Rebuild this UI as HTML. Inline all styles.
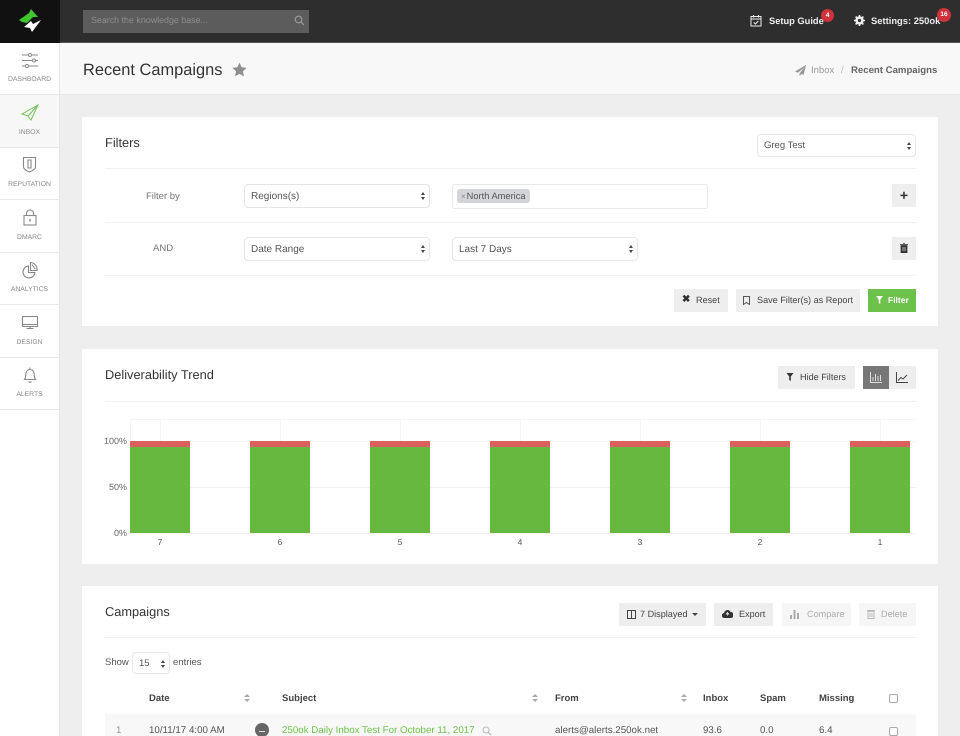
<!DOCTYPE html>
<html><head><meta charset="utf-8"><style>
*{box-sizing:border-box}
html,body{margin:0;padding:0;width:960px;height:736px;overflow:hidden;background:#eee;font-family:"Liberation Sans",sans-serif;color:#555;text-rendering:geometricPrecision}
#w{position:absolute;left:0;top:0;width:960px;height:736px;overflow:hidden;filter:blur(.3px)}
.a{position:absolute}
.t{position:absolute;white-space:nowrap}
.card{position:absolute;left:82px;width:856px;background:#fff}
.hr{position:absolute;height:1px;background:#f0f0f0}
.sel{position:absolute;background:#fff;border:1px solid #e6e6e6;border-radius:4px;font-size:10px;color:#555;padding-left:6px;height:24px;line-height:23px}
.sel:after{content:"";position:absolute;right:4px;top:7px;width:0;height:0;border:2.5px solid transparent;border-bottom:3.5px solid #444;border-top:0}
.sel:before{content:"";position:absolute;right:4px;top:12px;width:0;height:0;border:2.5px solid transparent;border-top:3.5px solid #444;border-bottom:0}
.btn{position:absolute;background:#eee;height:23px;font-size:9.1px;line-height:23px;color:#444;white-space:nowrap}
.nav{position:absolute;left:0;width:59px;height:53px;border-bottom:1px solid #e8e8e8;text-align:center}
.nav span{position:absolute;left:0;right:0;top:34px;font-size:6.800px;color:#8a8a8a}
.nav svg{position:absolute;left:18px;top:8px}
.lab{position:absolute;font-size:9px;color:#666;text-align:right;width:26px;left:101px}
.bar{position:absolute;width:60px;top:441px;height:92px;background:#66b93f}
.bar:before{content:"";position:absolute;left:0;right:0;top:0;height:6px;background:#d9605c}
.x{position:absolute;top:537px;font-size:8.5px;color:#555;width:60px;text-align:center}
.th{position:absolute;top:693px;font-size:9.500px;font-weight:bold;color:#444;white-space:nowrap}
.td{position:absolute;top:725px;font-size:9.750px;color:#555;white-space:nowrap}
.sort{position:absolute;top:694px;width:6px;height:9px}
.sort:before{content:"";position:absolute;left:0;top:0;border:3px solid transparent;border-bottom:3px solid #aaa;border-top:0}
.sort:after{content:"";position:absolute;left:0;top:5px;border:3px solid transparent;border-top:3px solid #aaa;border-bottom:0}
.cb{position:absolute;left:889px;width:9px;height:9px;border:1px solid #aaa;border-radius:2px;background:#fff}
</style></head><body><div id="w">

<!-- top bar -->
<div class="a" style="left:0;top:0;width:960px;height:43px;background:#2e2e2e;border-bottom:1px solid #555"></div>
<div class="a" style="left:0;top:0;width:60px;height:43px;background:#111"></div>
<svg class="a" style="left:0;top:0" width="60" height="43" viewBox="0 0 60 43">
<path d="M19 20 L29 13 L31 9 L38 17 L33 17 L27 23 L22 22 Z" fill="#3fc62c"/>
<path d="M24 27 L31 21 L33 24 L41 20 L32 32 L30 28 Z" fill="#fff"/>
</svg>
<div class="a" style="left:83px;top:10px;width:226px;height:23px;background:#5c5c5c"></div>
<div class="t" style="left:91px;top:15px;font-size:8.900px;color:#8e8e8e">Search the knowledge base...</div>
<svg class="a" style="left:294px;top:15px" width="11" height="11" viewBox="0 0 11 11" fill="none" stroke="#9a9a9a" stroke-width="1.200"><circle cx="4.500" cy="4.500" r="3.300"/><path d="M7 7l3 3"/></svg>

<svg class="a" style="left:750px;top:14px" width="12" height="13" viewBox="0 0 12 13" fill="none" stroke="#eee" stroke-width="1"><rect x="1" y="2.500" width="10" height="9.500"/><path d="M1 5h10M3.500 1v2.500M8.500 1v2.500M3.700 8.300l1.700 1.700 3-3"/></svg>
<div class="t" style="left:769px;top:15.500px;font-size:9.300px;font-weight:bold;color:#eee">Setup Guide</div>
<div class="a" style="left:821px;top:9px;width:13px;height:13px;border-radius:50%;background:#d0323c;color:#fff;font-size:6.500px;font-weight:bold;text-align:center;line-height:13px">4</div>
<svg class="a" style="left:854px;top:15px" width="11" height="11" viewBox="0 0 11 11"><circle cx="5.500" cy="5.500" r="3.200" fill="none" stroke="#eee" stroke-width="2"/><path d="M5.500 0v11M0 5.500h11M1.600 1.600l7.800 7.800M9.400 1.600l-7.800 7.800" stroke="#eee" stroke-width="1.600"/><circle cx="5.500" cy="5.500" r="1.600" fill="#2e2e2e"/></svg>
<div class="t" style="left:871px;top:15px;font-size:9.400px;font-weight:bold;color:#eee">Settings: 250ok</div>
<div class="a" style="left:937px;top:8px;width:14px;height:14px;border-radius:50%;background:#d0323c;color:#fff;font-size:6.500px;font-weight:bold;text-align:center;line-height:14px">16</div>

<!-- sidebar -->
<div class="a" style="left:0;top:43px;width:60px;height:693px;background:#fff;border-right:1px solid #e6e6e6"></div>
<div class="nav" style="top:43px;height:52px"><svg width="24" height="24" viewBox="0 0 24 24" fill="none" stroke="#888" stroke-width=".9"><path d="M4 4h16M4 9.500h16M4 15h16"/><circle cx="12" cy="4" r="1.500" fill="#fff"/><circle cx="16" cy="9.500" r="1.500" fill="#fff"/><circle cx="9" cy="15" r="1.500" fill="#fff"/></svg><span style="top:33px">DASHBOARD</span></div>
<div class="nav" style="top:95px;height:53px;background:#f7f7f7"><svg width="24" height="24" viewBox="0 0 24 24" fill="none" stroke="#6fc257" stroke-width="1"><path d="M20 2 L4 11 L10 13 L13 17 Z M20 2 L10 13"/></svg><span>INBOX</span></div>
<div class="nav" style="top:148px;height:52px"><svg width="24" height="24" viewBox="0 0 24 24" fill="none" stroke="#888" stroke-width="1.100"><path d="M5.500 1.500h12v9.500q0 2.500-6 5q-6-2.500-6-5zM10 4h3v8h-3z"/></svg><span style="top:33px">REPUTATION</span></div>
<div class="nav" style="top:200px;height:53px"><svg width="24" height="24" viewBox="0 0 24 24" fill="none" stroke="#888" stroke-width="1.100"><rect x="6" y="7.500" width="12" height="9.500"/><path d="M8.500 7.500V5.500a3.500 3.500 0 017 0v2"/><path d="M12 11v2.500" stroke-width="1.500"/></svg><span>DMARC</span></div>
<div class="nav" style="top:253px;height:52px"><svg width="24" height="24" viewBox="0 0 24 24" fill="none" stroke="#888" stroke-width="1.100"><path d="M10.500 5a6 6 0 106.500 6.500h-6.500z"/><path d="M12.500 1.500a7 7 0 016.500 8h-6.500zM14 3.500l3 4.500"/></svg><span style="top:33px">ANALYTICS</span></div>
<div class="nav" style="top:305px;height:53px"><svg width="24" height="24" viewBox="0 0 24 24" fill="none" stroke="#888" stroke-width="1.100"><rect x="4.500" y="3.500" width="15" height="10"/><path d="M4.500 11.500h15M8.500 15.500h7M12 13.500v2"/></svg><span>DESIGN</span></div>
<div class="nav" style="top:358px;height:52px"><svg width="24" height="24" viewBox="0 0 24 24" fill="none" stroke="#888" stroke-width="1.100"><path d="M6.500 13.500c1.500-2 1-4 1.500-6.500.5-2.500 2.500-3.500 4-3.500s3.500 1 4 3.500c.5 2.500 0 4.500 1.500 6.500zM10.500 15.500c1 1 2 1 3 0M12 3.500V1.500"/></svg><span style="top:33px">ALERTS</span></div>

<!-- page header -->
<div class="a" style="left:60px;top:43px;width:900px;height:52px;background:#f8f8f8;border-bottom:1px solid #e8e8e8"></div>
<div class="t" style="left:83px;top:61px;font-size:16.400px;color:#333">Recent Campaigns</div>
<svg class="a" style="left:232px;top:62px" width="15" height="15" viewBox="0 0 24 24"><path d="M12 1l3.400 7.400 8 1-5.900 5.500 1.600 8L12 19l-7.100 3.900 1.600-8L.6 9.400l8-1z" fill="#8f8f8f"/></svg>
<svg class="a" style="left:795px;top:65px" width="11" height="11" viewBox="0 0 11 11"><path d="M11 0L0 6.500l3 1.300L9 2.500 4.500 8.500V11l2-2 2 1z" fill="#999"/></svg>
<div class="t" style="left:811px;top:65px;font-size:9.500px;color:#999">Inbox</div>
<div class="t" style="left:841px;top:65px;font-size:9.500px;color:#bbb">/</div>
<div class="t" style="left:851px;top:65px;font-size:9.600px;font-weight:bold;color:#666">Recent Campaigns</div>

<!-- Filters card -->
<div class="card" style="top:117px;height:209px"></div>
<div class="t" style="left:105px;top:135px;font-size:12.800px;color:#333">Filters</div>
<div class="sel" style="left:757px;top:134px;width:159px;height:23px;line-height:22px;font-size:9.500px">Greg Test</div>
<div class="hr" style="left:105px;top:168px;width:811px"></div>
<div class="t" style="left:146px;top:190.500px;font-size:9.500px;color:#777">Filter by</div>
<div class="sel" style="left:244px;top:184px;width:186px">Regions(s)</div>
<div class="a" style="left:452px;top:184px;width:256px;height:25px;background:#fff;border:1px solid #e8e8e8;border-radius:3px"></div>
<div class="a" style="left:457px;top:189px;width:73px;height:14px;background:#d3d5d9;border-radius:3px;font-size:9.300px;line-height:14px;color:#555;padding-left:4px;white-space:nowrap"><span style="color:#888;font-size:8px;margin-right:1px">×</span>North America</div>
<div class="btn" style="left:892px;top:184px;width:24px;text-align:center;font-size:14px;font-weight:bold;line-height:23px;color:#333">+</div>
<div class="hr" style="left:105px;top:222px;width:811px"></div>
<div class="t" style="left:153px;top:242.500px;font-size:9.500px;color:#777">AND</div>
<div class="sel" style="left:244px;top:237px;width:186px">Date Range</div>
<div class="sel" style="left:452px;top:237px;width:186px">Last 7 Days</div>
<div class="btn" style="left:892px;top:237px;width:24px"></div>
<svg class="a" style="left:900px;top:243px" width="8" height="10" viewBox="0 0 8 10"><path d="M0 1.500h8M3 .5h2M1 2.500h6V10H1z" fill="#333" stroke="#333" stroke-width=".8"/><path d="M3 4v4M5 4v4" stroke="#eee" stroke-width=".7"/></svg>
<div class="hr" style="left:105px;top:275px;width:811px"></div>
<div class="btn" style="left:674px;top:289px;width:54px;padding-left:22px">Reset</div>
<div class="t" style="left:682px;top:294px;font-size:10px;font-weight:bold;color:#333">✖</div>
<div class="btn" style="left:736px;top:289px;width:124px;padding-left:21px">Save Filter(s) as Report</div>
<svg class="a" style="left:743px;top:296px" width="7" height="9" viewBox="0 0 7 9" fill="none" stroke="#555"><path d="M.5.500h6v8L3.500 6.500.5 8.500z"/></svg>
<div class="btn" style="left:868px;top:289px;width:48px;background:#6cc24a;color:#fff;font-weight:bold;padding-left:20px;font-size:8.500px">Filter</div>
<svg class="a" style="left:876px;top:296px" width="7" height="8" viewBox="0 0 7 8"><path d="M0 0h7L4.300 3.500V8L2.700 7V3.500z" fill="#fff"/></svg>

<!-- Deliverability -->
<div class="card" style="top:349px;height:215px"></div>
<div class="t" style="left:105px;top:367px;font-size:12.800px;color:#333">Deliverability Trend</div>
<div class="btn" style="left:778px;top:366px;width:77px;padding-left:22px">Hide Filters</div>
<svg class="a" style="left:786px;top:373px" width="8" height="8" viewBox="0 0 7 8"><path d="M0 0h7L4.300 3.500V8L2.700 7V3.500z" fill="#333"/></svg>
<div class="btn" style="left:863px;top:366px;width:26px;background:#777"></div>
<svg class="a" style="left:870px;top:372px" width="12" height="11" viewBox="0 0 12 11" fill="none" stroke="#ddd"><path d="M.5 0v10.500H12M3 9V5M5.500 9V2M8 9V4M10.500 9V3"/></svg>
<div class="btn" style="left:889px;top:366px;width:27px"></div>
<svg class="a" style="left:896px;top:372px" width="12" height="11" viewBox="0 0 12 11" fill="none" stroke="#444"><path d="M.5 0v10.500H12M2 8.500l3-3 2 1.500 4-4"/></svg>
<div class="hr" style="left:105px;top:401px;width:811px"></div>

<div class="a" style="left:130px;top:419px;width:786px;height:1px;background:#f5f5f5"></div>
<div class="a" style="left:130px;top:441px;width:786px;height:1px;background:#f2f2f2"></div>
<div class="a" style="left:130px;top:487px;width:786px;height:1px;background:#f2f2f2"></div>
<div class="a" style="left:130px;top:533px;width:786px;height:1px;background:#f2f2f2"></div>
<div class="a" style="left:130px;top:419px;width:1px;height:114px;background:#f5f5f5"></div>
<div class="a" style="left:160px;top:419px;width:1px;height:22px;background:#f3f3f3"></div>
<div class="a" style="left:280px;top:419px;width:1px;height:22px;background:#f3f3f3"></div>
<div class="a" style="left:400px;top:419px;width:1px;height:22px;background:#f3f3f3"></div>
<div class="a" style="left:520px;top:419px;width:1px;height:22px;background:#f3f3f3"></div>
<div class="a" style="left:640px;top:419px;width:1px;height:22px;background:#f3f3f3"></div>
<div class="a" style="left:760px;top:419px;width:1px;height:22px;background:#f3f3f3"></div>
<div class="a" style="left:880px;top:419px;width:1px;height:22px;background:#f3f3f3"></div>
<div class="lab" style="top:436px">100%</div>
<div class="lab" style="top:482px">50%</div>
<div class="lab" style="top:528px">0%</div>
<div class="bar" style="left:130px"></div><div class="bar" style="left:250px"></div><div class="bar" style="left:370px"></div><div class="bar" style="left:490px"></div><div class="bar" style="left:610px"></div><div class="bar" style="left:730px"></div><div class="bar" style="left:850px"></div>
<div class="x" style="left:130px">7</div><div class="x" style="left:250px">6</div><div class="x" style="left:370px">5</div><div class="x" style="left:490px">4</div><div class="x" style="left:610px">3</div><div class="x" style="left:730px">2</div><div class="x" style="left:850px">1</div>

<!-- Campaigns -->
<div class="card" style="top:586px;height:150px"></div>
<div class="t" style="left:105px;top:604px;font-size:12.800px;color:#333">Campaigns</div>
<div class="btn" style="left:619px;top:603px;width:87px;padding-left:21px">7 Displayed</div>
<svg class="a" style="left:627px;top:610px" width="9" height="9" viewBox="0 0 9 9" fill="none" stroke="#444"><path d="M.5.500h8v8h-8zM4.500.500v8"/></svg>
<div class="a" style="left:692px;top:613px;border:3px solid transparent;border-top:3px solid #444;border-bottom:0"></div>
<div class="btn" style="left:714px;top:603px;width:59px;padding-left:25px">Export</div>
<svg class="a" style="left:722px;top:609px" width="11" height="9" viewBox="0 0 11 9"><path d="M2.500 9a2.500 2.500 0 01-.3-5A3.300 3.300 0 018.500 3 3 3 0 019 9z" fill="#333"/><path d="M5.500 3.500v3M4 5.500l1.500-2 1.500 2" stroke="#eee" fill="none" stroke-width=".8"/></svg>
<div class="btn" style="left:782px;top:603px;width:69px;padding-left:25px;background:#f6f6f6;color:#aaa">Compare</div>
<svg class="a" style="left:790px;top:609px" width="9" height="10" viewBox="0 0 9 10"><path d="M0 6h2v4H0zM3.500 1h2v9h-2zM7 4h2v6H7z" fill="#aaa"/></svg>
<div class="btn" style="left:859px;top:603px;width:57px;padding-left:22px;background:#f6f6f6;color:#aaa">Delete</div>
<svg class="a" style="left:867px;top:609px" width="8" height="10" viewBox="0 0 8 10" fill="none" stroke="#bbb"><path d="M0 1.500h8M1 2.500h6V9.500H1zM3 4v4M5 4v4"/></svg>
<div class="hr" style="left:105px;top:637px;width:811px"></div>

<div class="t" style="left:105px;top:657px;font-size:9.500px;color:#555">Show</div>
<div class="sel" style="left:132px;top:652px;width:38px;height:22px;line-height:21px;padding-left:6px;font-size:9.500px">15</div>
<div class="t" style="left:173px;top:657px;font-size:9.500px;color:#555">entries</div>

<div class="th" style="left:149px">Date</div><div class="sort" style="left:244px"></div>
<div class="th" style="left:282px">Subject</div><div class="sort" style="left:532px"></div>
<div class="th" style="left:555px">From</div><div class="sort" style="left:681px"></div>
<div class="th" style="left:703px">Inbox</div>
<div class="th" style="left:760px">Spam</div>
<div class="th" style="left:819px">Missing</div>
<div class="cb" style="top:694px"></div>

<div class="a" style="left:105px;top:714px;width:811px;height:22px;background:#f8f8f8"></div>
<div class="td" style="left:116px;color:#999">1</div>
<div class="td" style="left:149px">10/11/17 4:00 AM</div>
<div class="a" style="left:255px;top:723px;width:14px;height:14px;border-radius:50%;background:#666"></div>
<div class="a" style="left:259px;top:731px;width:6px;height:1px;background:#ddd"></div>
<div class="td" style="left:282px;color:#6cc24a">250ok Daily Inbox Test For October 11, 2017</div>
<svg class="a" style="left:482px;top:726px" width="10" height="10" viewBox="0 0 10 10" fill="none" stroke="#bbb" stroke-width="1.100"><circle cx="4" cy="4" r="3"/><path d="M6.300 6.300l3 3"/></svg>
<div class="td" style="left:555px">alerts@alerts.250ok.net</div>
<div class="td" style="left:703px">93.6</div>
<div class="td" style="left:760px">0.0</div>
<div class="td" style="left:819px">6.4</div>
<div class="cb" style="top:727px"></div>
</div></body></html>
